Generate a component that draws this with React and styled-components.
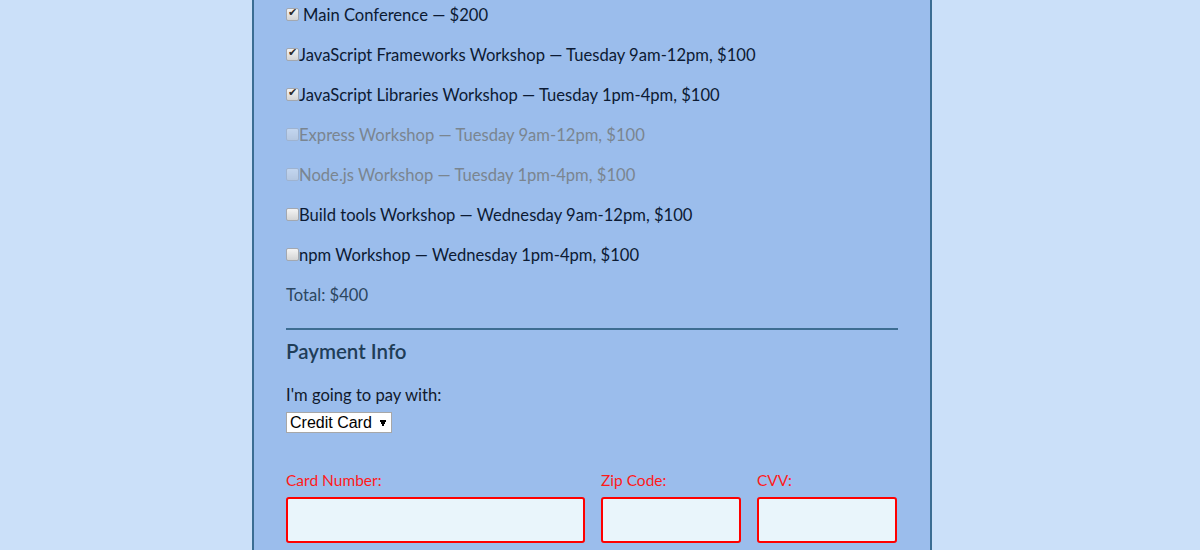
import React from "react";
import styled, { createGlobalStyle } from "styled-components";

const GlobalStyle = createGlobalStyle`
  html, body {
    margin: 0;
    padding: 0;
    background: #cbe0f9;
    font-family: "Lato", "Open Sans", sans-serif;
  }
`;

const Page = styled.div`
  width: 1200px;
  height: 550px;
  overflow: hidden;
  display: flex;
  justify-content: center;
  padding-right: 16px;
  box-sizing: border-box;
`;

const Form = styled.form`
  width: 680px;
  box-sizing: border-box;
  background: #9bbdec;
  border-left: 2px solid #3b6d93;
  border-right: 2px solid #3b6d93;
  padding: 5px 32px 0;
  display: flex;
  flex-direction: column;
`;

const Activities = styled.fieldset`
  border: none;
  margin: 0;
  padding: 0;
  display: flex;
  flex-direction: column;
  gap: 20px;
`;

const Activity = styled.label`
  display: flex;
  align-items: center;
  height: 20px;
  font-size: 16.6px;
  color: ${(p) => (p.disabled ? "#7a8590" : "#0c1a33")};
`;

const Check = styled.input.attrs({ type: "checkbox" })`
  appearance: none;
  width: 13px;
  height: 13px;
  margin: -2px ${(p) => (p.$spaced ? "4px" : "0")} 0 0;
  border: 1px solid #a3a8b0;
  border-radius: 2px;
  background: linear-gradient(#f4f4f4, #d4d4d4);
  position: relative;
  flex-shrink: 0;
  opacity: ${(p) => (p.disabled ? 0.45 : 1)};

  &:checked::after {
    content: "✔";
    position: absolute;
    left: 1px;
    top: -3px;
    font-size: 11px;
    color: #2b2b2b;
  }
`;

const Total = styled.p`
  margin: 20px 0 0;
  font-size: 16.6px;
  line-height: 20px;
  color: #2c4660;
`;

const Rule = styled.hr`
  border: none;
  height: 2px;
  background: #3d6d92;
  margin: 23px 0 0;
`;

const Heading = styled.h3`
  margin: 9px 0 0;
  font-size: 20.5px;
  line-height: 24px;
  font-weight: 600;
  color: #1f3d58;
`;

const PayLabel = styled.label`
  display: block;
  margin-top: 22px;
  font-size: 16.6px;
  line-height: 20px;
  color: #111a2c;
`;

const Select = styled.select`
  align-self: flex-start;
  margin-top: 7px;
  height: 21px;
  width: 106px;
  font-family: "Liberation Sans", Arial, sans-serif;
  font-size: 16px;
  color: #000;
  background: #fff;
  border: 1px solid #a7a7a7;
  border-radius: 0;
  padding: 0 3px;
  appearance: none;
  background-image: linear-gradient(60deg, transparent 50%, #000 50%),
    linear-gradient(-60deg, transparent 50%, #000 50%);
  background-repeat: no-repeat;
  background-size: 4px 6px, 4px 6px;
  background-position: 92px 7px, 96px 7px;
`;

const CardRow = styled.div`
  margin-top: 38px;
  display: grid;
  grid-template-columns: 299px 140px 140px;
  gap: 16px;
`;

const Field = styled.div`
  display: flex;
  flex-direction: column;
`;

const FieldLabel = styled.label`
  font-size: 15.5px;
  line-height: 18px;
  color: #ff1a1a;
  margin-bottom: 8px;
`;

const Input = styled.input`
  height: 46px;
  box-sizing: border-box;
  border: 2px solid #ff0000;
  border-radius: 3px;
  background: #e9f5fb;
`;

const activities = [
  { text: "Main Conference — $200", checked: true, spaced: true },
  { text: "JavaScript Frameworks Workshop — Tuesday 9am-12pm, $100", checked: true },
  { text: "JavaScript Libraries Workshop — Tuesday 1pm-4pm, $100", checked: true },
  { text: "Express Workshop — Tuesday 9am-12pm, $100", disabled: true },
  { text: "Node.js Workshop — Tuesday 1pm-4pm, $100", disabled: true },
  { text: "Build tools Workshop — Wednesday 9am-12pm, $100" },
  { text: "npm Workshop — Wednesday 1pm-4pm, $100" },
];

export default function App() {
  return (
    <Page>
      <GlobalStyle />
      <Form>
        <Activities>
          {activities.map((a) => (
            <Activity key={a.text} disabled={a.disabled}>
              <Check
                defaultChecked={a.checked}
                disabled={a.disabled}
                $spaced={a.spaced}
              />
              {a.text}
            </Activity>
          ))}
        </Activities>
        <Total>Total: $400</Total>
        <Rule />
        <Heading>Payment Info</Heading>
        <PayLabel>I'm going to pay with:</PayLabel>
        <Select defaultValue="credit">
          <option value="credit">Credit Card</option>
          <option value="paypal">PayPal</option>
          <option value="bitcoin">Bitcoin</option>
        </Select>
        <CardRow>
          <Field>
            <FieldLabel>Card Number:</FieldLabel>
            <Input />
          </Field>
          <Field>
            <FieldLabel>Zip Code:</FieldLabel>
            <Input />
          </Field>
          <Field>
            <FieldLabel>CVV:</FieldLabel>
            <Input />
          </Field>
        </CardRow>
      </Form>
    </Page>
  );
}
